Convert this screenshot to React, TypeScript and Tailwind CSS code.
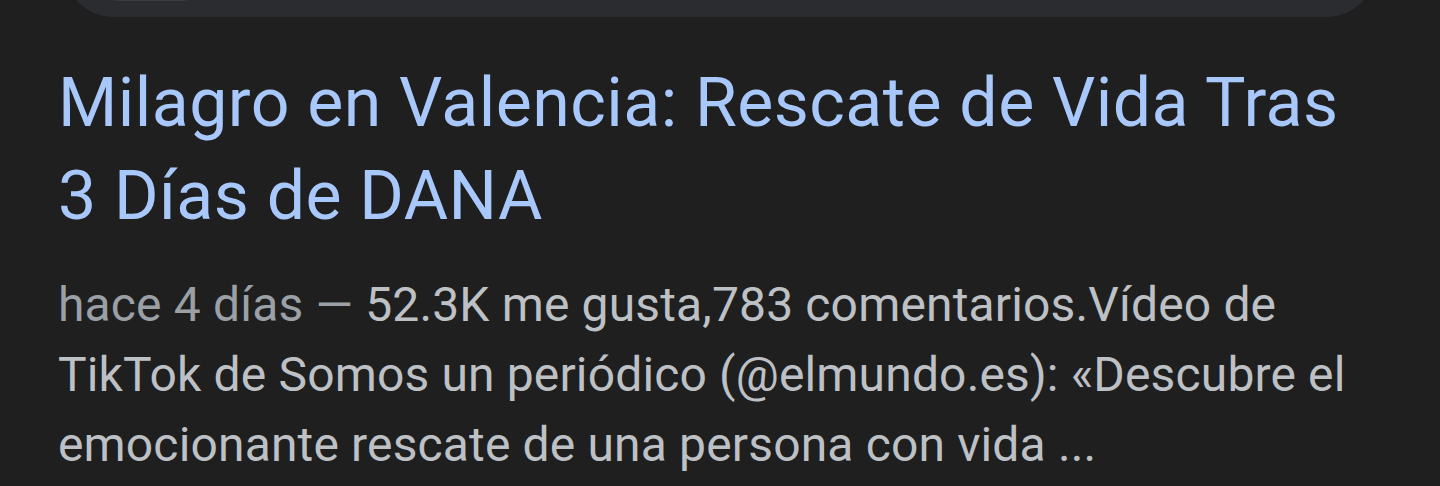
export default function App() {
  return (
    <div className="w-[1440px] h-[486px] overflow-hidden bg-[#1f1f1f] font-['Roboto',sans-serif]">
      {/* bottom edge of the previous card */}
      <div className="mx-[65px] -mt-[40px] h-[57px] rounded-b-[48px] bg-[#2b2c2f] flex items-end px-[42px]">
        <div className="w-[86px] h-[41px] rounded-b-[10px] bg-[#3a3b3e] mb-[16px]" />
      </div>

      <div className="pl-[58px] pr-[60px] pt-[40px]">
        <h2 className="text-[68px] leading-[93px] text-[#a8c7fa] font-normal tracking-[0.45px]">
          Milagro en Valencia: Rescate de Vida Tras 3 Días de DANA
        </h2>
        <p className="mt-[27px] text-[48px] leading-[70px] text-[#bdc1c6] font-normal tracking-[0.15px]">
          <span className="text-[#9aa0a6]">hace 4 días — </span>
          52.3K me gusta,783 comentarios.Vídeo de TikTok de Somos un periódico (@elmundo.es): «Descubre el
          emocionante rescate de una persona con vida ...
        </p>
      </div>
    </div>
  );
}
